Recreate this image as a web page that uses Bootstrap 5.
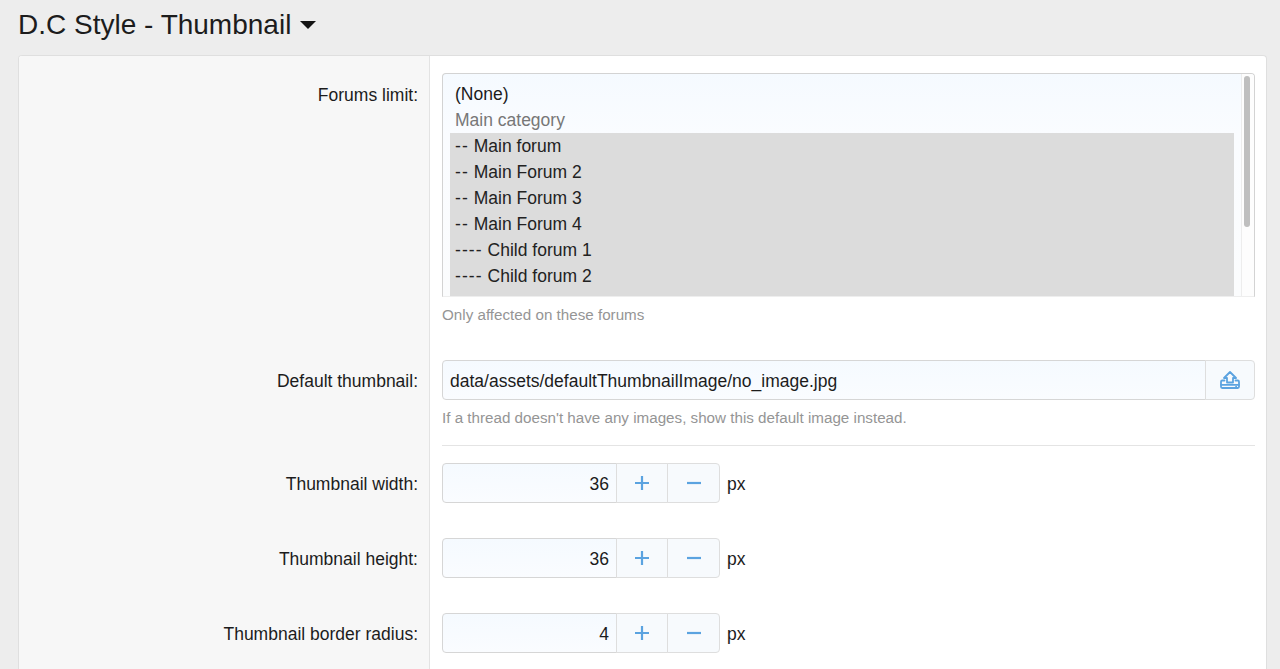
<!doctype html>
<html lang="en">
<head>
<meta charset="utf-8">
<title>D.C Style - Thumbnail</title>
<link href="https://cdn.jsdelivr.net/npm/bootstrap@5.3.0/dist/css/bootstrap.min.css" rel="stylesheet">
<style>
html,body{height:669px;overflow:hidden}
body{background:#ededed;color:#1c1c1c;font-family:"Liberation Sans",Arial,sans-serif;font-size:17.5px;line-height:26px}
.page-wrap{padding:0 13px 0 18px}
.page-title{font-size:28px;line-height:32px;font-weight:400;margin:0;padding-top:9px;height:55px;color:#1c1c1c}
.title-caret{display:inline-block;width:0;height:0;border:8.5px solid transparent;border-top:8.5px solid #141414;border-bottom:0;margin-left:9px;vertical-align:5px}
.opt-card{background:#fff;border:1px solid #dfdfdf;border-bottom:0;border-radius:4px 4px 0 0;overflow:hidden;--bs-card-border-radius:4px}
.opt-row{display:flex}
.opt-label{width:411px;flex:none;background:#f7f7f7;border-right:1px solid #e3e3e3;text-align:right;padding-right:11px}
.opt-field{flex:1;min-width:0;padding-left:12px;padding-right:11px}
.row-forums .opt-label{padding-top:26px}
.row-forums .opt-field{padding-top:17px;padding-bottom:19px}
.row-thumb .opt-label{padding-top:24px}
.row-thumb .opt-field{padding-top:16px;padding-bottom:17px}
.fld-divider{height:1px;background:#e4e4e4}
.row-dim .opt-label{padding-top:25px}
.row-dim .opt-field{padding-top:17px;padding-bottom:18px}
.row-dim.is-last .opt-field{padding-bottom:16px}
.multi-box{height:224px;border:1px solid #d3d3d3;border-bottom-color:#eee;border-radius:4px 4px 0 0;display:flex;overflow:hidden;background:linear-gradient(#f5faff,#fafcff 60px,#fbfcfd)}
.multi-list{flex:1;min-width:0;padding:7px 0 0 7px;overflow:hidden}
.multi-opt{height:26px;padding-left:5px;line-height:26px;white-space:pre}
.multi-opt.is-sel{background:#dcdcdc;color:#222}
.multi-opt.is-group{color:#777}
.dash-run{letter-spacing:1.1px}
.multi-track{flex:none;width:13px;margin-left:7px;border-left:1px solid #ededed;background:#fdfdfd;padding:2px 3px 0 2px}
.multi-thumb{height:151px;width:6px;border-radius:3px;background:#bfbfbf}
.fld-hint{font-size:15.2px;line-height:20px;color:#959595;margin-top:8px}
.fld-group{height:40px}
.fld-group .form-control{height:40px;background:linear-gradient(#f5faff,#fafcff);border-color:#d6d6d6;color:#1c1c1c;font-size:17.5px;padding:2px 7px 0;border-radius:4px;box-shadow:none}
.fld-btn{background:#f7fafd;border:1px solid #dedede;color:#5ba3e0;padding:0;display:flex;align-items:center;justify-content:center;border-radius:4px}
.fld-btn svg{display:block}
.btn-upload{width:50px}
.spin-group{width:278px}
.spin-group .form-control{text-align:right}
.spin-btn{width:52px}
.spin-btn:last-child{width:53px}
.unit-text{margin-left:7px;margin-top:8px}
</style>
</head>
<body>
<div class="page-wrap">
  <h1 class="page-title">D.C Style - Thumbnail<span class="title-caret"></span></h1>
  <div class="card opt-card">
    <div class="opt-row row-forums">
      <div class="opt-label">Forums limit:</div>
      <div class="opt-field">
        <div class="multi-box">
          <div class="multi-list">
            <div class="multi-opt">(None)</div>
            <div class="multi-opt is-group">Main category</div>
            <div class="multi-opt is-sel"><span class="dash-run">--</span> Main forum</div>
            <div class="multi-opt is-sel"><span class="dash-run">--</span> Main Forum 2</div>
            <div class="multi-opt is-sel"><span class="dash-run">--</span> Main Forum 3</div>
            <div class="multi-opt is-sel"><span class="dash-run">--</span> Main Forum 4</div>
            <div class="multi-opt is-sel"><span class="dash-run">----</span> Child forum 1</div>
            <div class="multi-opt is-sel"><span class="dash-run">----</span> Child forum 2</div>
            <div class="multi-opt is-sel"></div>
          </div>
          <div class="multi-track"><div class="multi-thumb"></div></div>
        </div>
        <div class="fld-hint">Only affected on these forums</div>
      </div>
    </div>
    <div class="opt-row row-thumb">
      <div class="opt-label">Default thumbnail:</div>
      <div class="opt-field">
        <div class="input-group fld-group">
          <input class="form-control" type="text" value="data/assets/defaultThumbnailImage/no_image.jpg" aria-label="Default thumbnail">
          <button class="btn fld-btn btn-upload" type="button" aria-label="Upload">
            <svg width="20" height="18" viewBox="0 0 20 18" fill="none" stroke="#5ba3e0" stroke-width="1.8" stroke-linejoin="round" stroke-linecap="round"><path d="M10 1 16 7H13V11.5H7V7H4Z"/><path d="M4.5 9.5H2.2Q1 9.5 1 10.8V15.8Q1 17 2.2 17H17.8Q19 17 19 15.8V10.8Q19 9.5 17.8 9.5H15.5"/><path d="M1 13.8H19"/><path d="M15.8 15.4h.6" stroke-width="1.2"/></svg>
          </button>
        </div>
        <div class="fld-hint">If a thread doesn't have any images, show this default image instead.</div>
      </div>
    </div>
    <div class="opt-row"><div class="opt-label"></div><div class="opt-field"><div class="fld-divider"></div></div></div>
    <div class="opt-row row-dim">
      <div class="opt-label">Thumbnail width:</div>
      <div class="opt-field d-flex align-items-start">
        <div class="input-group fld-group spin-group">
          <input class="form-control" type="text" value="36" aria-label="Thumbnail width">
          <button class="btn fld-btn spin-btn" type="button" aria-label="Increase"><svg width="14" height="14" viewBox="0 0 14 14" stroke="#5ba3e0" stroke-width="2.2"><path d="M7 0V14M0 7H14"/></svg></button>
          <button class="btn fld-btn spin-btn" type="button" aria-label="Decrease"><svg width="14" height="14" viewBox="0 0 14 14" stroke="#5ba3e0" stroke-width="2.2"><path d="M0 7H14"/></svg></button>
        </div>
        <span class="unit-text">px</span>
      </div>
    </div>
    <div class="opt-row row-dim">
      <div class="opt-label">Thumbnail height:</div>
      <div class="opt-field d-flex align-items-start">
        <div class="input-group fld-group spin-group">
          <input class="form-control" type="text" value="36" aria-label="Thumbnail height">
          <button class="btn fld-btn spin-btn" type="button" aria-label="Increase"><svg width="14" height="14" viewBox="0 0 14 14" stroke="#5ba3e0" stroke-width="2.2"><path d="M7 0V14M0 7H14"/></svg></button>
          <button class="btn fld-btn spin-btn" type="button" aria-label="Decrease"><svg width="14" height="14" viewBox="0 0 14 14" stroke="#5ba3e0" stroke-width="2.2"><path d="M0 7H14"/></svg></button>
        </div>
        <span class="unit-text">px</span>
      </div>
    </div>
    <div class="opt-row row-dim is-last">
      <div class="opt-label">Thumbnail border radius:</div>
      <div class="opt-field d-flex align-items-start">
        <div class="input-group fld-group spin-group">
          <input class="form-control" type="text" value="4" aria-label="Thumbnail border radius">
          <button class="btn fld-btn spin-btn" type="button" aria-label="Increase"><svg width="14" height="14" viewBox="0 0 14 14" stroke="#5ba3e0" stroke-width="2.2"><path d="M7 0V14M0 7H14"/></svg></button>
          <button class="btn fld-btn spin-btn" type="button" aria-label="Decrease"><svg width="14" height="14" viewBox="0 0 14 14" stroke="#5ba3e0" stroke-width="2.2"><path d="M0 7H14"/></svg></button>
        </div>
        <span class="unit-text">px</span>
      </div>
    </div>
  </div>
</div>
</body>
</html>
